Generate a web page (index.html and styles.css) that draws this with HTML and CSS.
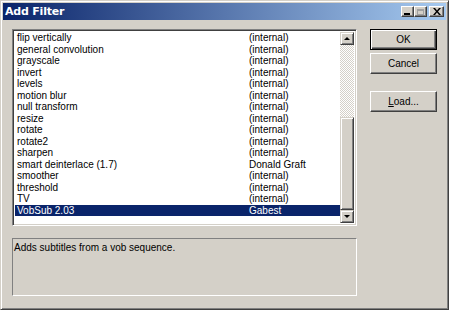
FILE: index.html
```html
<!DOCTYPE html>
<html lang="en">
<head>
    <meta charset="UTF-8">
    <title>Add Filter</title>
    <link rel="stylesheet" href="styles.css">
</head>
<body>
    <section class="window">
        <header class="titlebar">
            <span class="title">Add Filter</span>
            <div class="caps">
                <a class="cap" href="javascript:;"><i class="min"></i></a>
                <a class="cap" href="javascript:;"><i class="max"></i></a>
                <a class="cap close" href="javascript:;">
                    <svg width="8" height="7" viewBox="0 0 8 7"><path d="M0 0h2l2 2.5L6 0h2L5 3.5 8 7H6L4 4.5 2 7H0l3-3.5z" fill="#000"/></svg>
                </a>
            </div>
        </header>
        <div class="content">
            <div class="left">
                <div class="listbox">
                    <ul class="list">
                        <li><span>flip vertically</span><span>(internal)</span></li>
                        <li><span>general convolution</span><span>(internal)</span></li>
                        <li><span>grayscale</span><span>(internal)</span></li>
                        <li><span>invert</span><span>(internal)</span></li>
                        <li><span>levels</span><span>(internal)</span></li>
                        <li><span>motion blur</span><span>(internal)</span></li>
                        <li><span>null transform</span><span>(internal)</span></li>
                        <li><span>resize</span><span>(internal)</span></li>
                        <li><span>rotate</span><span>(internal)</span></li>
                        <li><span>rotate2</span><span>(internal)</span></li>
                        <li><span>sharpen</span><span>(internal)</span></li>
                        <li><span>smart deinterlace (1.7)</span><span>Donald Graft</span></li>
                        <li><span>smoother</span><span>(internal)</span></li>
                        <li><span>threshold</span><span>(internal)</span></li>
                        <li><span>TV</span><span>(internal)</span></li>
                        <li class="active"><span>VobSub 2.03</span><span>Gabest</span></li>
                    </ul>
                    <div class="scrollbar">
                        <a class="arrow" href="javascript:;"><i class="up"></i></a>
                        <div class="track"></div>
                        <div class="thumb"></div>
                        <a class="arrow" href="javascript:;"><i class="down"></i></a>
                    </div>
                </div>
                <div class="desc">Adds subtitles from a vob sequence.</div>
            </div>
            <div class="buttons">
                <button class="btn default">OK</button>
                <button class="btn">Cancel</button>
                <button class="btn load"><u>L</u>oad...</button>
            </div>
        </div>
    </section>
</body>
</html>
```
FILE: styles.css
```css
/* reset */
body{
    margin: 0;
    font-family: "Liberation Sans", Arial, sans-serif;
    font-size: 10px;
    color: #000;
}
ul{
    margin: 0;
    padding: 0;
    list-style: none;
}
a{
    text-decoration: none;
    color: inherit;
}
/* window */
.window{
    width: 449px;
    height: 310px;
    box-sizing: border-box;
    background: #d4d0c8;
    border: 1px solid;
    border-color: #d4d0c8 #404040 #404040 #d4d0c8;
    box-shadow: inset 1px 1px 0 #fff, inset -1px -1px 0 #808080;
    padding: 2px 2px;
    display: flex;
    flex-direction: column;
}
.titlebar{
    height: 17px;
    background: linear-gradient(to right, #0a246a, #a6caf0);
    display: flex;
    align-items: center;
    justify-content: space-between;
    padding: 0 2px 0 2px;
}
.title{
    color: #fff;
    font-weight: bold;
    font-size: 11px;
    font-family: "DejaVu Sans", Verdana, sans-serif;
    letter-spacing: -0.2px;
}
.caps{
    display: flex;
    align-items: center;
}
.cap{
    width: 13px;
    height: 11px;
    box-sizing: border-box;
    background: #d4d0c8;
    border: 1px solid;
    border-color: #fff #404040 #404040 #fff;
    box-shadow: inset -1px -1px 0 #808080;
    display: flex;
    align-items: center;
    justify-content: center;
}
.cap.close{
    margin-left: 2px;
    width: 15px;
}
.cap .min{
    width: 6px;
    height: 2px;
    background: #000;
    margin-top: 5px;
    margin-left: -2px;
}
.cap .max{
    width: 7px;
    height: 6px;
    box-sizing: border-box;
    border: 1px solid #a0a0a0;
    border-top-width: 2px;
}
/* content */
.content{
    flex: 1;
    display: flex;
    padding: 9px 0 0 9px;
}
.left{
    width: 345px;
}
.listbox{
    height: 197px;
    box-sizing: border-box;
    background: #fff;
    border: 1px solid;
    border-color: #808080 #fff #fff #808080;
    box-shadow: inset 1px 1px 0 #404040, inset -1px -1px 0 #d4d0c8;
    padding: 2px;
    display: flex;
}
.list{
    flex: 1;
}
.list li{
    height: 11.5px;
    line-height: 11.5px;
    display: flex;
    padding-left: 2px;
    white-space: nowrap;
}
.list li span:first-child{
    width: 232px;
}
.list li.active{
    background: #0a246a;
    color: #fff;
}
.scrollbar{
    width: 14px;
    display: flex;
    flex-direction: column;
    background-color: #eeede9;
    background-image: repeating-conic-gradient(#fff 0 25%, #d4d0c8 0 50%);
    background-size: 2px 2px;
}
.arrow, .thumb{
    height: 13px;
    box-sizing: border-box;
    background: #d4d0c8;
    border: 1px solid;
    border-color: #d4d0c8 #404040 #404040 #d4d0c8;
    box-shadow: inset 1px 1px 0 #fff, inset -1px -1px 0 #808080;
    display: flex;
    align-items: center;
    justify-content: center;
}
.track{
    height: 72px;
}
.thumb{
    flex: 1;
}
.arrow i{
    width: 0;
    height: 0;
    border-left: 3px solid transparent;
    border-right: 3px solid transparent;
}
.arrow .up{
    border-bottom: 3px solid #000;
}
.arrow .down{
    border-top: 3px solid #000;
}
.desc{
    margin-top: 12px;
    height: 58px;
    box-sizing: border-box;
    border: 1px solid;
    border-color: #808080 #fff #fff #808080;
    padding: 3px 1px;
}
/* buttons */
.buttons{
    margin-left: 13px;
    display: flex;
    flex-direction: column;
}
.btn{
    width: 67px;
    height: 21px;
    box-sizing: border-box;
    background: #d4d0c8;
    border: 1px solid;
    border-color: #fff #404040 #404040 #fff;
    box-shadow: inset -1px -1px 0 #808080;
    font-family: "Liberation Sans", Arial, sans-serif;
    font-size: 10px;
    color: #000;
    padding: 0;
    margin-bottom: 3px;
}
.btn.default{
    border: 1px solid #000;
    box-shadow: inset 1px 1px 0 #fff, inset -1px -1px 0 #404040, inset -2px -2px 0 #808080;
}
.btn.load{
    margin-top: 14px;
}
```
